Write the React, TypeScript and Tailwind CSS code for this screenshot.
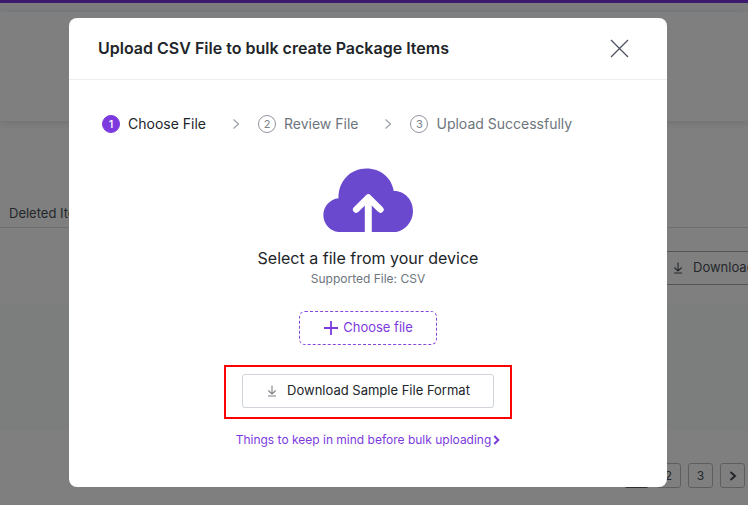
import React from 'react';

interface StepProps {
    number: number;
    label: string;
    active?: boolean;
}

const steps: StepProps[] = [
    { number: 1, label: 'Choose File', active: true },
    { number: 2, label: 'Review File' },
    { number: 3, label: 'Upload Successfully' },
];

const Step: React.FC<StepProps> = ({ number, label, active = false }) => (
    <div
        className={`flex items-center gap-2 whitespace-nowrap text-sm leading-6 ${active ? 'text-[#212529]' : 'text-[#6c757d]'}`}
        aria-current={active ? 'step' : undefined}
    >
        <span
            className={`flex size-[18px] items-center justify-center rounded-full border pb-px text-[11px] leading-4 ${
                active ? 'border-[#7c3ade] bg-[#7c3ade] font-medium text-white' : 'border-[#8f949e] text-[#7d828b]'
            }`}
        >
            {number}
        </span>
        <span>{label}</span>
    </div>
);

const StepArrow: React.FC = () => (
    <svg className="mr-[18px] ml-[26px] h-3 w-2 shrink-0" viewBox="0 0 8 12" fill="none" aria-hidden="true">
        <path d="M1.5 1.5L6.5 6L1.5 10.5" stroke="#9a9ea6" strokeWidth="1.1" />
    </svg>
);

const DownloadIcon: React.FC = () => (
    <svg className="size-3 shrink-0" viewBox="0 0 12 12" fill="none" stroke="currentColor" aria-hidden="true">
        <path d="M6 0.5V9M2.3 5.5L6 9L9.7 5.5M2 11H10" strokeWidth="1.1" />
    </svg>
);

const CloudUpload: React.FC = () => (
    <svg className="h-16 w-[90px]" viewBox="0 0 90 64" aria-hidden="true">
        <path
            d="M15.5 64A17 17 0 0 1 15.5 30.2C15.3 13 27.5 0.5 43.5 0.5C57.5 0.5 68.5 9.5 70.8 23C81.5 22.6 90 31.8 90 43C90 54 82 62 73.5 64Z"
            fill="#6a49cf"
        />
        <path d="M45.3 64V30" stroke="#fff" strokeWidth="7" />
        <path d="M33.2 41.5L45.3 29.6L57.4 41.5" fill="none" stroke="#fff" strokeWidth="6.6" strokeLinecap="round" strokeLinejoin="round" />
    </svg>
);

const PackagePage: React.FC = () => (
    <div className="flex min-h-screen flex-col overflow-hidden bg-white text-[13px] text-[#495057]">
        <div className="h-[3px] bg-[#7c35dc]" />
        <div className="h-[9px] bg-[#f6f9fc]" />
        <div className="relative h-[109px] bg-white shadow-[0_2px_8px_rgba(0,0,0,0.12)]" />
        <div className="h-[107px] border-b border-[#dadcdf] px-[9px] pt-[82px]">
            <a href="#deleted" className="leading-5">Deleted Items</a>
        </div>
        <div className="flex h-[77px] items-start justify-end pt-[23px]">
            <button
                type="button"
                className="-mr-5 flex h-[34px] w-[108px] items-center gap-[9px] border border-[#a9adb3] pl-[11px] whitespace-nowrap"
            >
                <DownloadIcon />
                Download
            </button>
        </div>
        <div className="h-[125px] bg-[#f8fdfb]" />
        <nav className="mt-[33px] flex justify-end gap-[7px] pr-[3px]" aria-label="Pagination">
            <button type="button" className="size-[25px] rounded-[3px] border border-[#5c5f66] bg-[#6b6d72] text-xs text-white">1</button>
            <button type="button" className="size-[25px] rounded-[3px] border border-[#b9bcc2] text-xs">2</button>
            <button type="button" className="size-[25px] rounded-[3px] border border-[#b9bcc2] text-xs">3</button>
            <button
                type="button"
                aria-label="Next page"
                className="flex size-[25px] items-center justify-center rounded-[3px] border border-[#b9bcc2]"
            >
                <svg className="h-3 w-2" viewBox="0 0 8 12" fill="none">
                    <path d="M1.5 2L6 6L1.5 10" stroke="#4b4d54" strokeWidth="2" />
                </svg>
            </button>
        </nav>
    </div>
);

const UploadModal: React.FC = () => (
    <div className="absolute inset-0 flex items-start justify-center bg-black/50 pt-[18px] pr-3">
        <div
            role="dialog"
            aria-modal="true"
            aria-labelledby="upload-title"
            className="w-full max-w-[598px] rounded-lg bg-white text-[#212529]"
        >
            <header className="flex items-center justify-between border-b border-[#eceef0] pt-[18px] pr-9 pb-[19px] pl-[29px]">
                <h1 id="upload-title" className="text-base leading-6 font-semibold">
                    Upload CSV File to bulk create Package Items
                </h1>
                <button type="button" aria-label="Close" className="flex size-6 items-center justify-center">
                    <svg className="size-5" viewBox="0 0 20 20" fill="none">
                        <path d="M2 2L19 19M19 2L2 19" stroke="#4f5263" strokeWidth="1.3" />
                    </svg>
                </button>
            </header>

            <div className="flex flex-col items-center pt-8 pb-[37px]">
                <div className="flex items-center self-start pl-[33px]">
                    {steps.map((step, index) => (
                        <React.Fragment key={step.number}>
                            {index > 0 && <StepArrow />}
                            <Step {...step} />
                        </React.Fragment>
                    ))}
                </div>

                <div className="mt-8">
                    <CloudUpload />
                </div>
                <h2 className="mt-[14px] text-base leading-6">Select a file from your device</h2>
                <p className="text-xs leading-[18px] text-[#6c757d]">Supported File: CSV</p>

                <button
                    type="button"
                    className="mt-[23px] flex h-[34px] w-[138px] items-center justify-center gap-1 rounded-md border border-dashed border-[#8647de] text-[13px] text-[#7c3ade]"
                >
                    <svg className="size-4" viewBox="0 0 16 16" fill="none" aria-hidden="true">
                        <path d="M8 1V15M1 8H15" stroke="currentColor" strokeWidth="1.8" />
                    </svg>
                    Choose file
                </button>

                <div className="mt-5 border-2 border-[#fb0303] px-4 pt-[7px] pb-[9px]">
                    <button
                        type="button"
                        className="flex h-[34px] w-[252px] items-center justify-center gap-[9px] rounded-[3px] border border-[#ced4da] text-[13px]"
                    >
                        <span className="text-[#7d8087]"><DownloadIcon /></span>
                        Download Sample File Format
                    </button>
                </div>

                <a href="#guidelines" className="mt-[11px] flex items-center gap-[2px] text-xs leading-5 text-[#7c3ade]">
                    Things to keep in mind before bulk uploading
                    <svg className="h-[10px] w-[7px]" viewBox="0 0 7 10" fill="none" aria-hidden="true">
                        <path d="M1.3 1L5.3 5L1.3 9" stroke="currentColor" strokeWidth="2" />
                    </svg>
                </a>
            </div>
        </div>
    </div>
);

const App: React.FC = () => (
    <div className="relative min-h-screen font-['Inter',sans-serif]">
        <PackagePage />
        <UploadModal />
    </div>
);

export default App;
